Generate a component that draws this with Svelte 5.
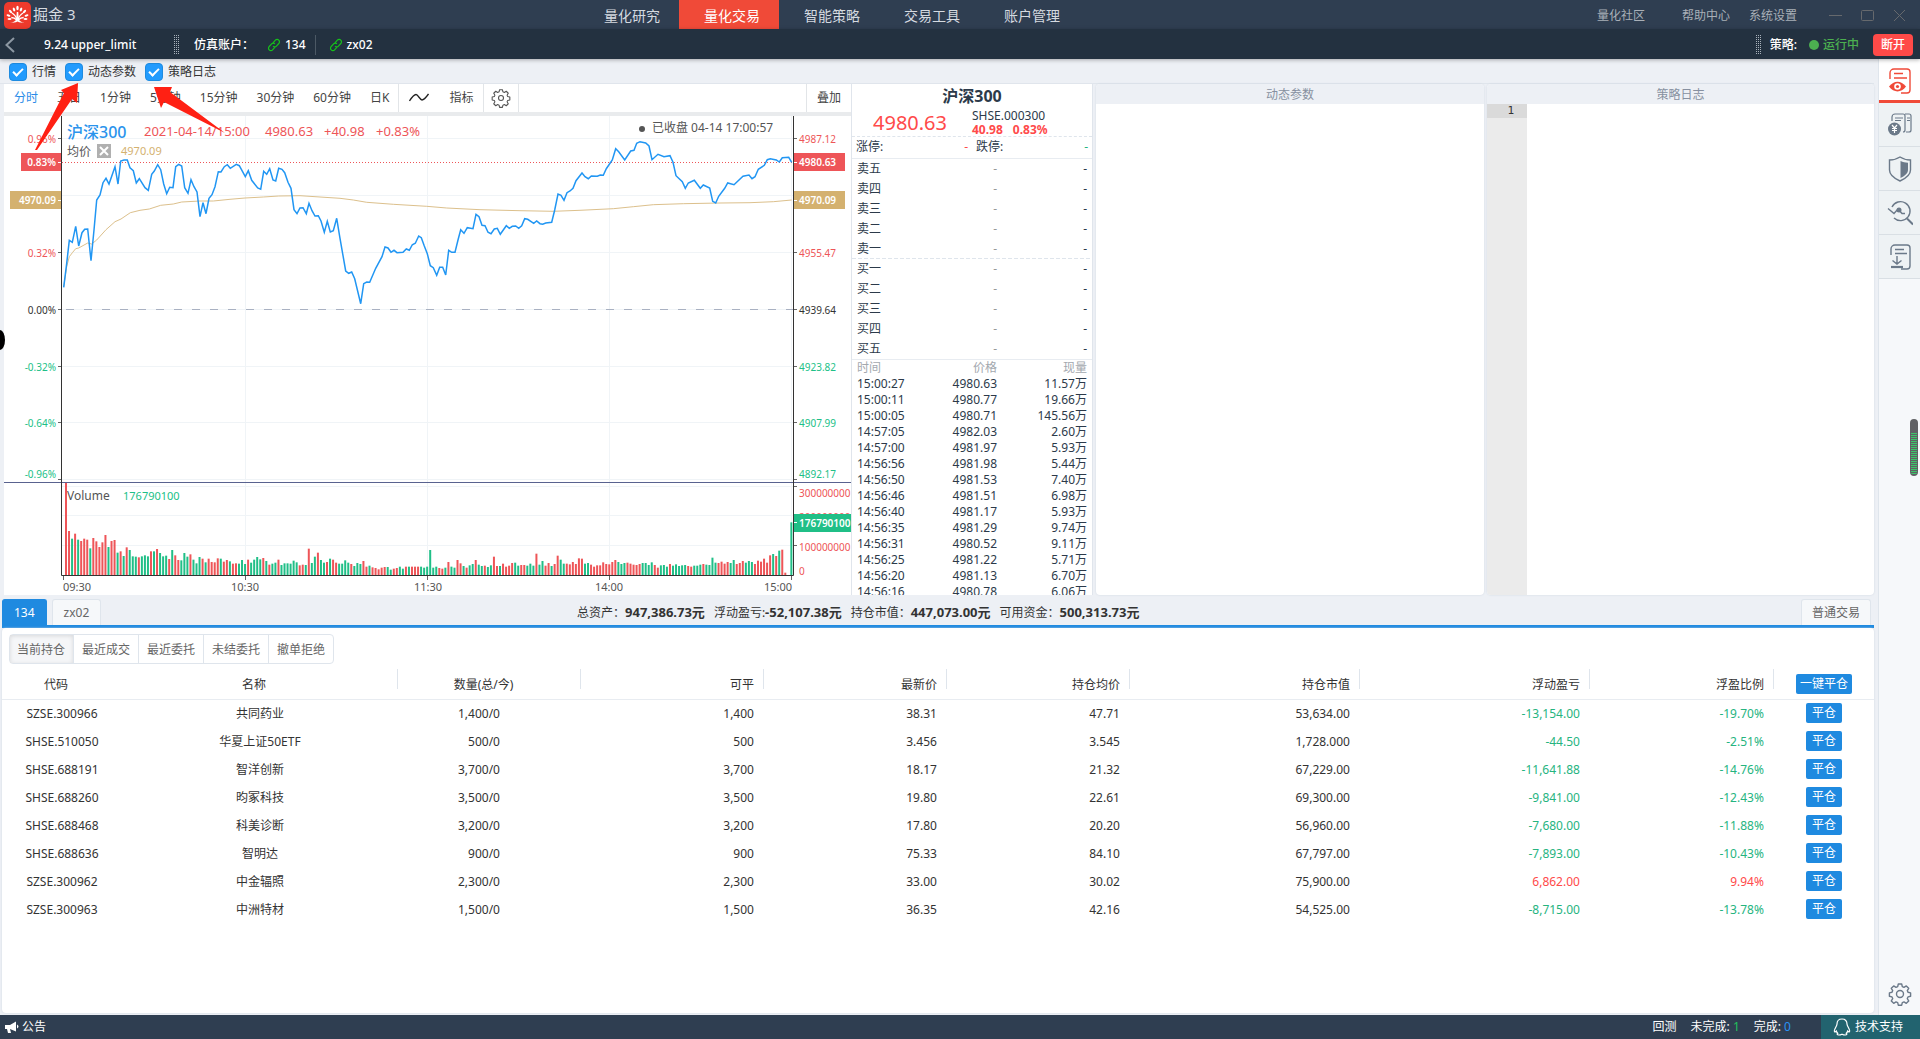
<script lang="ts">
	const navItems = ["量化研究", "量化交易", "智能策略", "交易工具", "账户管理"];
	const linkItems = ["量化社区", "帮助中心", "系统设置"];
	const periods = ["分时", "五日", "1分钟", "5分钟", "15分钟", "30分钟", "60分钟", "日K"];
	const subTabs = ["当前持仓", "最近成交", "最近委托", "未结委托", "撤单拒绝"];
	let activeNav = $state("量化交易");
	let activePeriod = $state("分时");
	let activeSub = $state("当前持仓");
	let account = $state("134");
	let panels = $state([
		{ id: "quote", label: "行情", on: true },
		{ id: "params", label: "动态参数", on: true },
		{ id: "log", label: "策略日志", on: true }
	]);

	const levels = ["卖五", "卖四", "卖三", "卖二", "卖一", "买一", "买二", "买三", "买四", "买五"];
	const trades = [
		["15:00:27", "4980.63", "11.57万"],
		["15:00:11", "4980.77", "19.66万"],
		["15:00:05", "4980.71", "145.56万"],
		["14:57:05", "4982.03", "2.60万"],
		["14:57:00", "4981.97", "5.93万"],
		["14:56:56", "4981.98", "5.44万"],
		["14:56:50", "4981.53", "7.40万"],
		["14:56:46", "4981.51", "6.98万"],
		["14:56:40", "4981.17", "5.93万"],
		["14:56:35", "4981.29", "9.74万"],
		["14:56:31", "4980.52", "9.11万"],
		["14:56:25", "4981.22", "5.71万"],
		["14:56:20", "4981.13", "6.70万"],
		["14:56:16", "4980.78", "6.06万"]
	];

	const stats = [
		["总资产：", "947,386.73元"],
		["浮动盈亏:", "-52,107.38元"],
		["持仓市值：", "447,073.00元"],
		["可用资金：", "500,313.73元"]
	];
	const columns = [
		{ name: "代码", width: 120 },
		{ name: "名称", width: 276 },
		{ name: "数量(总/今)", width: 183 },
		{ name: "可平", width: 183 },
		{ name: "最新价", width: 183 },
		{ name: "持仓均价", width: 183 },
		{ name: "持仓市值", width: 230 },
		{ name: "浮动盈亏", width: 230 },
		{ name: "浮盈比例", width: 184 },
		{ name: "", width: 100 }
	];
	const positions = [
		["SZSE.300966", "共同药业", "1,400", "38.31", "47.71", "53,634.00", "-13,154.00", "-19.70%"],
		["SHSE.510050", "华夏上证50ETF", "500", "3.456", "3.545", "1,728.000", "-44.50", "-2.51%"],
		["SHSE.688191", "智洋创新", "3,700", "18.17", "21.32", "67,229.00", "-11,641.88", "-14.76%"],
		["SHSE.688260", "昀冢科技", "3,500", "19.80", "22.61", "69,300.00", "-9,841.00", "-12.43%"],
		["SHSE.688468", "科美诊断", "3,200", "17.80", "20.20", "56,960.00", "-7,680.00", "-11.88%"],
		["SHSE.688636", "智明达", "900", "75.33", "84.10", "67,797.00", "-7,893.00", "-10.43%"],
		["SZSE.300962", "中金辐照", "2,300", "33.00", "30.02", "75,900.00", "6,862.00", "9.94%"],
		["SZSE.300963", "中洲特材", "1,500", "36.35", "42.16", "54,525.00", "-8,715.00", "-13.78%"]
	];

	// chart series, three units to a pixel
	const priceLine = "191,532 200,460 208,391 217,397 227,349 236,408 246,368 254,358 263,357 273,452 282,360 290,270 300,255 309,218 318,205 327,222 345,170 354,222 362,153 372,150 382,150 390,173 400,182 409,219 418,206 435,233 445,241 455,193 463,183 473,164 482,179 491,222 500,251 509,232 519,233 527,170 536,163 545,168 554,233 564,250 573,209 582,230 591,246 600,320 609,278 618,311 627,265 636,254 645,230 655,185 663,186 673,170 682,164 691,175 709,163 718,167 736,200 745,182 755,211 773,234 782,238 791,184 800,193 809,176 819,210 827,213 836,175 846,178 854,188 864,217 873,235 882,299 891,311 900,294 909,293 919,311 927,280 936,302 945,318 955,317 963,333 973,367 982,334 991,366 1000,362 1010,325 1019,380 1037,483 1046,490 1055,486 1064,506 1082,581 1091,521 1100,516 1109,517 1127,475 1146,440 1155,411 1164,414 1173,427 1182,421 1191,428 1209,427 1219,417 1228,421 1237,404 1246,400 1256,378 1264,383 1273,408 1282,431 1291,467 1300,473 1310,496 1319,472 1328,472 1337,495 1346,421 1355,427 1365,427 1374,390 1382,359 1392,370 1402,353 1419,356 1428,313 1437,320 1446,346 1455,347 1464,367 1473,371 1483,357 1492,355 1501,373 1519,347 1528,355 1537,349 1547,348 1556,355 1565,347 1574,326 1583,328 1601,340 1610,333 1620,341 1628,343 1637,339 1655,337 1664,300 1674,252 1683,256 1692,271 1701,248 1710,243 1719,235 1728,212 1746,189 1755,200 1765,206 1774,198 1792,199 1801,195 1810,196 1819,176 1837,150 1847,116 1856,125 1874,150 1892,123 1902,121 1910,100 1920,95 1937,99 1947,108 1956,149 1974,133 1992,140 2010,137 2019,157 2028,197 2047,215 2056,235 2065,219 2083,211 2101,235 2110,225 2129,234 2138,274 2147,279 2156,259 2174,235 2183,219 2202,224 2229,199 2247,195 2256,206 2265,200 2275,178 2293,166 2302,149 2311,146 2329,150 2338,156 2347,143 2366,142 2375,157";
	const avgLine = "191,530 200,470 208,440 218,427 227,416 236,414 263,399 275,402 290,390 318,359 345,335 363,327 391,308 420,301 448,297 482,286 520,282 545,276 600,273 640,273 690,268 735,264 790,261 836,258 900,257 960,261 1020,265 1060,270 1100,277 1180,283 1280,289 1340,294 1440,299 1560,302 1660,304 1740,301 1840,296 1900,290 1960,284 2050,281 2160,279 2250,278 2320,275 2375,270";
	const volumes = "277r 132r 109g 124r 106g 102r 109r 106r 80g 111r 101r 84r 98r 120r 84g 102r 105r 67g 71r 57g 83r 75g 56g 55g 53r 56g 59g 56g 71r 71g 78r 66g 56g 58g 48r 75g 59r 45r 44g 66g 55g 62r 46g 35g 54g 49r 38g 49r 39r 38r 50r 49g 40r 45r 41g 34r 35r 34g 45g 33g 46r 37g 46g 54g 47g 51r 42g 31r 34g 37g 46r 30g 35g 35g 34g 43g 38g 29r 31r 30g 79r 36g 55g 67r 45g 37g 39r 49g 46r 37r 34g 34g 44g 37g 33r 27g 36g 33g 42r 25r 28g 23r 21r 17r 22r 24r 24g 16g 19r 21r 25g 19g 25r 25g 25r 25r 25r 25g 22g 25g 75g 22g 25g 21r 19r 22g 39r 25g 22g 45r 35r 27g 22r 29g 33g 45r 31g 27g 28r 24g 29g 55r 27r 27g 34r 25r 28r 36r 37g 28g 30r 30r 28g 34g 28g 64r 31g 42g 28r 36r 27g 33r 58r 46g 34g 34r 32r 39r 33r 50r 49r 34g 36g 31r 25r 29r 29r 38r 33r 32r 39r 45r 39g 33g 36g 37r 34r 31r 30r 33r 36g 36g 30g 38g 30r 22r 29g 30g 25g 33r 28g 32g 27g 29g 30g 27r 25r 28g 28g 31g 33r 31g 30g 52g 37g 36r 40r 34r 39r 36g 45g 33r 36r 42r 37g 42g 39g 33r 43r 40r 49r 37r 59r 63g 57r 73g 76r 7r 0r 158g"
		.split(" ")
		.map((v, i) => ({
			x: 61 + i * 3.035,
			h: parseInt(v) / 3,
			up: v.endsWith("r")
		}));

	const toPoints = (s: string) =>
		s.split(" ").map((p) => {
			const [x, y] = p.split(",").map(Number);
			return `${(x / 3 - 4).toFixed(1)},${(y / 3 - 6).toFixed(1)}`;
		}).join(" ");

	const leftAxis = [
		{ y: 22.5, t: "0.96%", c: "up" },
		{ y: 136.5, t: "0.32%", c: "up" },
		{ y: 193.5, t: "0.00%", c: "flat" },
		{ y: 250.5, t: "-0.32%", c: "down" },
		{ y: 306.5, t: "-0.64%", c: "down" },
		{ y: 357.5, t: "-0.96%", c: "down" }
	];
	const rightAxis = [
		{ y: 22.5, t: "4987.12", c: "up" },
		{ y: 136.5, t: "4955.47", c: "up" },
		{ y: 193.5, t: "4939.64", c: "flat" },
		{ y: 250.5, t: "4923.82", c: "down" },
		{ y: 306.5, t: "4907.99", c: "down" },
		{ y: 357.5, t: "4892.17", c: "down" },
		{ y: 376.5, t: "300000000", c: "up" },
		{ y: 400.5, t: "200000000", c: "up" },
		{ y: 430.5, t: "100000000", c: "up" },
		{ y: 454.5, t: "0", c: "up" }
	];
	const gridRows = [22.5, 79.5, 136.5, 193.5, 250.5, 306.5, 363.5, 370.5, 399.5, 429.5];
	const gridCols = [241.5, 423.5, 605.5, 787.5];
	const tickRows = [22.5, 136.5, 193.5, 250.5, 306.5, 363.5];

	const gearPath = "M10.3 2h3.4l.6 2.6 1.7.7 2.3-1.4 2.4 2.4-1.4 2.3.7 1.7 2.6.6v3.4l-2.6.6-.7 1.7 1.4 2.3-2.4 2.4-2.3-1.4-1.7.7-.6 2.6h-3.4l-.6-2.6-1.7-.7-2.3 1.4-2.4-2.4 1.4-2.3-.7-1.7-2.6-.6v-3.4l2.6-.6.7-1.7-1.4-2.3 2.4-2.4 2.3 1.4 1.7-.7z";
</script>

{#snippet linkIcon()}
	<svg class="link" viewBox="0 0 14 14" width="14" height="14" aria-hidden="true">
		<path d="M6 4.8 8.4 2.2a2.3 2.3 0 0 1 3.4 0 2.3 2.3 0 0 1 0 3.3L9.4 8.1a2.3 2.3 0 0 1-3.3 0M8 9.2l-2.400 2.600a2.300 2.300 0 0 1-3.400 0 2.300 2.300 0 0 1 0-3.300l2.400-2.600a2.300 2.300 0 0 1 3.300 0" />
	</svg>
{/snippet}

<div class="page">
	<header class="topbar">
		<div class="brand">
			<svg viewBox="0 0 27 27" width="27" height="27" aria-hidden="true">
				<rect width="27" height="27" rx="5" fill="#ee3a2c" />
				<g fill="#fff">
					<ellipse cx="13.500" cy="6" rx="1.200" ry="2.200" />
					<ellipse cx="10" cy="7.500" rx="1.100" ry="2" transform="rotate(-22 10 7.500)" />
					<ellipse cx="17" cy="7.500" rx="1.100" ry="2" transform="rotate(22 17 7.500)" />
					<ellipse cx="6.500" cy="9.500" rx="1.100" ry="2" transform="rotate(-45 6.500 9.500)" />
					<ellipse cx="20.500" cy="9.500" rx="1.100" ry="2" transform="rotate(45 20.500 9.500)" />
					<ellipse cx="4.500" cy="13.500" rx="2" ry="1" transform="rotate(15 4.500 13.500)" />
					<ellipse cx="22.500" cy="13.500" rx="2" ry="1" transform="rotate(-15 22.500 13.500)" />
					<ellipse cx="5.500" cy="17" rx="2" ry="1" />
					<ellipse cx="21.500" cy="17" rx="2" ry="1" />
					<path d="M12.800 10h1.400l.6 7c.3 2 3 3.500 6.200 4-3-.2-5.500-.5-7.500-1.500-2 1-4.500 1.300-7.500 1.500 3.200-.5 5.900-2 6.200-4z" />
				</g>
				<path d="M13 17C11.500 13 9.500 12 8 11M14 17c1.500-4 3.500-5 5-6M12.800 18c-2-2-3.800-2.500-5.500-2.500M14.200 18c2-2 3.800-2.500 5.500-2.500" fill="none" stroke="#fff" stroke-width="1.300" />
			</svg>
			<span>掘金 3</span>
		</div>
		<nav>
			{#each navItems as item}
				<button class:active={activeNav === item} onclick={() => (activeNav = item)}>{item}</button>
			{/each}
		</nav>
		<div class="toplinks">
			{#each linkItems as item}
				<a href="#{item}">{item}</a>
			{/each}
			<button aria-label="最小化"><svg viewBox="0 0 13 13" width="13" height="13"><path d="M0 6.500h13" /></svg></button>
			<button aria-label="最大化"><svg viewBox="0 0 13 13" width="13" height="13"><rect x=".5" y="1.500" width="12" height="10" rx="1" /></svg></button>
			<button aria-label="关闭"><svg viewBox="0 0 13 13" width="13" height="13"><path d="m1 1 11 11M12 1 1 12" /></svg></button>
		</div>
	</header>

	<div class="subbar">
		<button class="back" aria-label="返回"><svg viewBox="0 0 10 16" width="10" height="16"><path d="M9 1 1.500 8 9 15" /></svg></button>
		<h1>9.24 upper_limit</h1>
		<i class="grip"></i>
		<span class="sim">仿真账户：</span>
		<span class="acct">{@render linkIcon()}134</span>
		<span class="acct second">{@render linkIcon()}zx02</span>
		<i class="grip right"></i>
		<span class="strategy">策略:</span>
		<span class="running">运行中</span>
		<button class="disconnect">断开</button>
	</div>

	<div class="body">
		<main>
			<div class="toggles">
				{#each panels as panel}
					<label for={panel.id}><input type="checkbox" id={panel.id} bind:checked={panel.on} />{panel.label}</label>
				{/each}
			</div>

			<div class="workspace">
				<section class="chart">
					<div class="tools">
						<div class="periods">
							{#each periods as p}
								<button class:on={activePeriod === p} onclick={() => (activePeriod = p)}>{p}</button>
							{/each}
						</div>
						<div class="group">
							<button aria-label="线形"><svg viewBox="0 0 20 10" width="20" height="10"><path d="M.5 8C3 4 5 1.500 7 1.500S11 7 13 7s4-2.500 6.500-6" stroke="#222" fill="none" stroke-width="1.300" /></svg></button>
							<button>指标</button>
						</div>
						<div class="group gear">
							<button aria-label="设置">
								<svg viewBox="0 0 24 24" width="20" height="20" fill="none" stroke="#555" stroke-width="1.300" stroke-linejoin="round"><path d={gearPath} /><circle cx="12" cy="12" r="3" /></svg>
							</button>
						</div>
						<button class="overlay">叠加</button>
					</div>

					<svg class="plot" viewBox="0 0 847 479" role="img" aria-label="沪深300 分时图">
						<rect width="847" height="479" fill="#fff" />
						<g stroke="#f0f4f7">
							{#each gridRows as y}<path d="M58 {y}H789" />{/each}
							{#each gridCols as x}<path d="M{x} 0V459" />{/each}
						</g>
						<path d="M58 193.500H789" stroke="#a9b1c2" stroke-dasharray="8 10" stroke-dashoffset="-4" />
						<path d="M58 46.500H789" stroke="#ee5558" stroke-dasharray="1 2" />

						<g class="bars">
							{#each volumes as v}
								<rect x={v.x} y={459 - v.h} width="2" height={v.h} class={v.up ? "up" : "down"} />
							{/each}
						</g>
						<polyline points={toPoints(avgLine)} fill="none" stroke="#dcc08c" />
						<polyline points={toPoints(priceLine)} fill="none" stroke="#2196f3" stroke-width="1.500" />

						<path d="M0 366.500H847" stroke="#59628f" />
						<path d="M57.500 0V459.500H789.500V0" fill="none" stroke="#333" />
						<g stroke="#666">
							{#each tickRows as y}<path d="M54 {y}h3M790 {y}h3" />{/each}
							<path d="M790 370.500h3M790 429.500h3M59.500 460v4" />
							{#each gridCols as x}<path d="M{x} 460v4" />{/each}
						</g>

						<g class="axis">
							{#each leftAxis as a}<text x="52" y={a.y + 4} text-anchor="end" class={a.c}>{a.t}</text>{/each}
							{#each rightAxis as a}<text x="795" y={a.y + 4} class={a.c}>{a.t}</text>{/each}
						</g>
						<g class="tags">
							<rect x="17" y="37" width="40" height="18" fill="#ee5558" />
							<rect x="6" y="75" width="51" height="18" fill="#d4b16f" />
							<rect x="790" y="37" width="51" height="18" fill="#ee5558" />
							<rect x="790" y="75" width="51" height="18" fill="#d4b16f" />
							<rect x="790" y="398" width="57" height="18" fill="#20bf87" />
							<path d="M54 46.500h3M54 84.500h3M790 46.500h3M790 84.500h3M790 406.500h3" stroke="#fff" />
							<text x="52" y="50" text-anchor="end">0.83%</text>
							<text x="52" y="88" text-anchor="end">4970.09</text>
							<text x="795" y="50">4980.63</text>
							<text x="795" y="88">4970.09</text>
							<text x="795" y="411">176790100</text>
						</g>
						<g class="times">
							<text x="59" y="475">09:30</text>
							<text x="241" y="475" text-anchor="middle">10:30</text>
							<text x="424" y="475" text-anchor="middle">11:30</text>
							<text x="605" y="475" text-anchor="middle">14:00</text>
							<text x="788" y="475" text-anchor="end">15:00</text>
						</g>

						<text x="63" y="22" class="name">沪深300</text>
						<g class="head">
							<text x="140" y="20">2021-04-14/15:00</text>
							<text x="261" y="20">4980.63</text>
							<text x="320" y="20">+40.98</text>
							<text x="372" y="20">+0.83%</text>
						</g>
						<g class="legend">
							<text x="63" y="40">均价</text>
							<rect x="93" y="28" width="14" height="14" fill="#b0b0b0" />
							<path d="m96 31 8 8M104 31l-8 8" stroke="#fff" stroke-width="2" />
							<text x="117" y="39" class="avg">4970.09</text>
							<circle cx="638" cy="13" r="3" fill="#555" />
							<text x="648" y="16">已收盘 04-14 17:00:57</text>
							<text x="63" y="384">Volume</text>
							<text x="119" y="384" class="vol">176790100</text>
						</g>
					</svg>
				</section>

				<section class="quote">
					<h2>沪深300</h2>
					<div class="price">
						<strong>4980.63</strong>
						<p>SHSE.000300<br /><b>40.98</b><b>0.83%</b></p>
					</div>
					<div class="limits">
						<span>涨停:</span><i class="up">-</i><span>跌停:</span><i class="down">-</i>
					</div>
					<table class="depth">
						<tbody>
							{#each levels as l}
								<tr class:mid={l === "卖一"}><th scope="row">{l}</th><td class="dim">-</td><td>-</td></tr>
							{/each}
						</tbody>
					</table>
					<div class="trades">
						<table>
							<thead><tr><th>时间</th><th>价格</th><th>现量</th></tr></thead>
							<tbody>
								{#each trades as t}
									<tr><td>{t[0]}</td><td>{t[1]}</td><td>{t[2]}</td></tr>
								{/each}
							</tbody>
						</table>
					</div>
				</section>

				<section class="panel">
					<h3>动态参数</h3>
				</section>
				<section class="panel">
					<h3>策略日志</h3>
					<div class="editor"><div class="gutter"><span>1</span></div></div>
				</section>
			</div>

			<div class="tabs">
				<div class="left">
					{#each ["134", "zx02"] as name}
						<button class:active={account === name} onclick={() => (account = name)}>{name}</button>
					{/each}
				</div>
				<div class="stats">
					{#each stats as [label, value]}
						<span>{label}<b>{value}</b></span>
					{/each}
				</div>
				<button class="mode">普通交易</button>
			</div>

			<section class="holdings">
				<div class="subtabs">
					{#each subTabs as t}
						<button class:active={activeSub === t} onclick={() => (activeSub = t)}>{t}</button>
					{/each}
				</div>
				<table>
					<colgroup>
						{#each columns as c}<col style="width: {c.width / 18.72}%" />{/each}
					</colgroup>
					<thead>
						<tr>
							{#each columns as c}
								<th>{#if c.name}{c.name}{:else}<button class="close all">一键平仓</button>{/if}</th>
							{/each}
						</tr>
					</thead>
					<tbody>
						{#each positions as p}
							<tr>
								<td>{p[0]}</td>
								<td>{p[1]}</td>
								<td>{p[2]}/0</td>
								<td>{p[2]}</td>
								<td>{p[3]}</td>
								<td>{p[4]}</td>
								<td>{p[5]}</td>
								<td class={p[6].startsWith("-") ? "down" : "up"}>{p[6]}</td>
								<td class={p[7].startsWith("-") ? "down" : "up"}>{p[7]}</td>
								<td><button class="close">平仓</button></td>
							</tr>
						{/each}
					</tbody>
				</table>
			</section>
		</main>

		<aside>
			<button class="active" aria-label="策略监控">
				<svg viewBox="0 0 26 28" width="26" height="28">
					<path d="M3 12V6a4 4 0 0 1 4-4h13a3 3 0 0 1 3 3v18a3 3 0 0 1-3 3h-6M7 6.500h9M7 11h13" />
					<path d="M2 19.500c5-6.500 12-6.500 17 0-5 6.500-12 6.500-17 0z" fill="currentColor" stroke="none" />
					<circle cx="10.500" cy="19.500" r="3.300" fill="#fff" stroke="none" /><circle cx="10.500" cy="19.500" r="1.600" fill="currentColor" stroke="none" />
				</svg>
			</button>
			<button aria-label="资金">
				<svg viewBox="0 0 26 28" width="26" height="28">
					<path d="M5 10V6a3 3 0 0 1 3-3h8a2 2 0 0 1 2 2v14a2 2 0 0 1-2 2M18 3h4a2 2 0 0 1 2 2v14a2 2 0 0 1-2 2h-3M8 7h8M8 9.500h6M20 7h3M20 9.500h3" stroke-width="1.200" />
					<circle cx="7.500" cy="18" r="6.500" fill="currentColor" stroke="none" />
					<path d="m5 14 2.500 3L10 14M7.500 17v5M5 17.500h5M5 19.500h5" stroke="#fff" stroke-width="1.200" />
				</svg>
			</button>
			<button aria-label="风控">
				<svg viewBox="0 0 26 28" width="26" height="28">
					<path d="M13 2c3 2 6 3 10.500 3v10c0 5-5 8.500-10.500 11C7.500 23.500 2.500 20 2.500 15V5C7 5 10 4 13 2z" />
					<path d="M13.500 6c2.500 1 4.500 1.500 7.500 1.700V15c0 3.500-3.500 6-7.500 8z" fill="currentColor" stroke="none" />
				</svg>
			</button>
			<button aria-label="分析">
				<svg viewBox="0 0 26 28" width="26" height="28">
					<path d="M5 8a9.500 9.500 0 1 1 2 11M1 9.500l6 5 4-4.500 4 4.500h3" />
					<circle cx="12" cy="11" r="2.500" fill="currentColor" stroke="none" />
					<path d="m20 19.500 6 6" stroke-width="2" />
				</svg>
			</button>
			<button aria-label="导出">
				<svg viewBox="0 0 26 28" width="26" height="28">
					<path d="M4 12V6a4 4 0 0 1 4-4h12a3 3 0 0 1 3 3v18a3 3 0 0 1-3 3h-6M8 6.500h9M8 10.500h12M10 13v8M5.500 17.500 10 21l4.500-3.500" />
					<path d="M4 24h12" stroke-width="2.200" />
				</svg>
			</button>
			<button class="settings" aria-label="设置">
				<svg viewBox="0 0 24 24" width="24" height="24"><path d={gearPath} stroke-linejoin="round" /><circle cx="12" cy="12" r="3.500" /></svg>
			</button>
		</aside>
	</div>

	<footer>
		<svg viewBox="0 0 14 12" width="14" height="12" aria-hidden="true"><path d="M0 4h5l6-3.500v10L5 8H0zM2 8h3l1 4H3zM12 3.500c2 1 2 3 0 4z" fill="#fff" /></svg>
		<span class="notice">公告</span>
		<span>回测</span>
		<span>未完成: <b class="green">1</b></span>
		<span>完成: <b class="blue">0</b></span>
		<button>
			<svg viewBox="0 0 18 18" width="18" height="18" aria-hidden="true"><path d="M9 1C5.500 1 4 3.500 4 6c0 2-2.500 4.500-2.700 7 .2 1.400 1.200.8 2 0 .3 1 .8 1.700 1.400 2.200-1 .5-.8 1.800 1 1.800 1.300 0 2.300-.3 3.300-.8 1 .5 2 .8 3.300.8 1.800 0 2-1.300 1-1.800.6-.5 1.100-1.200 1.400-2.200.8.8 1.800 1.400 2 0C16.500 10.500 14 8 14 6c0-2.500-1.500-5-5-5z" fill="none" stroke="#fff" stroke-width="1.200" /></svg>
			技术支持
		</button>
	</footer>

	<button class="drawer" aria-label="展开"></button>
	<i class="meter"></i>
	<svg class="arrows" viewBox="0 0 240 160" width="240" height="160" aria-hidden="true">
		<path d="M35 150 64 93l-3-3 17-7-1 20-5-4-35 51z" fill="#ff2013" />
		<path d="M154 87h18l-2 5 55 41-61-31-3 6z" fill="#ff2013" />
	</svg>
</div>

<style>
	:global(body) {
		margin: 0;
	}
	.page {
		position: relative;
		display: flex;
		flex-direction: column;
		min-height: 100vh;
		font-family: "Noto Sans", "Noto Sans CJK SC", sans-serif;
		font-size: 12px;
		line-height: 16px;
		color: #333;
		background: #edf0f5;
	}
	button {
		padding: 0;
		border: 0;
		background: none;
		font: inherit;
		color: inherit;
		cursor: pointer;
	}
	h1, h2, h3, p {
		margin: 0;
		font-weight: normal;
	}
	h1, h3 {
		font-size: 12px;
	}
	svg {
		display: block;
	}
	table {
		width: 100%;
		border-collapse: collapse;
		table-layout: fixed;
	}
	th, td {
		padding: 0;
		font-weight: normal;
	}
	.up {
		color: #ff4a4a;
		fill: #ee5558;
	}
	.down {
		color: #26b47f;
		fill: #20bf87;
	}

	.topbar {
		display: grid;
		grid-template-columns: 579fr 500px 841fr;
		height: 29px;
		background: #2f3e51;
		color: #d5dae0;
	}
	.brand {
		display: flex;
		align-items: center;
		gap: 2px;
		padding-left: 4px;
		font-size: 15px;
	}
	.brand span {
		line-height: 29px;
		padding-bottom: 2px;
	}
	nav {
		display: flex;
	}
	nav button {
		flex: 1;
		padding-left: 6px;
		font-size: 14px;
	}
	nav .active {
		background: #f04a38;
		color: #fff;
	}
	.toplinks {
		display: flex;
		justify-content: flex-end;
		align-items: center;
		gap: 19px;
		padding-right: 14px;
	}
	.toplinks a {
		color: #a9b0b8;
		text-decoration: none;
	}
	.toplinks a:first-child {
		margin-right: 18px;
	}
	.toplinks a + button {
		margin-left: 13px;
	}
	.toplinks svg {
		fill: none;
		stroke: #66696d;
	}

	.subbar {
		display: flex;
		align-items: center;
		box-sizing: border-box;
		height: 30px;
		padding: 1px 7px 0 5px;
		background: #233140;
		color: #fff;
		font-weight: 500;
		box-shadow: 0 1px 4px rgba(0, 0, 0, 0.3);
		z-index: 1;
	}
	.back svg {
		fill: none;
		stroke: #8d98a3;
		stroke-width: 2;
	}
	h1 {
		width: 129px;
		padding-left: 29px;
		font-weight: 500;
	}
	.grip {
		width: 6px;
		height: 20px;
		background: conic-gradient(#a9b2bb 25%, transparent 0) 0 0 / 2px 2px;
	}
	.sim {
		width: 73px;
		padding-left: 15px;
	}
	.acct {
		display: flex;
		align-items: center;
		gap: 4px;
		height: 20px;
	}
	.acct.second {
		margin-left: 9px;
		padding-left: 13px;
		border-left: 1px solid #4c5965;
	}
	.link path {
		fill: none;
		stroke: #16c01a;
		stroke-width: 1.2;
	}
	.grip.right {
		margin-left: auto;
	}
	.strategy {
		margin: 0 12px 0 9px;
	}
	.running {
		display: flex;
		align-items: center;
		gap: 4px;
		color: #4caf50;
	}
	.running::before {
		content: "";
		width: 10px;
		height: 10px;
		border-radius: 50%;
		background: #4caf50;
	}
	.disconnect {
		width: 40px;
		height: 22px;
		margin-left: 14px;
		border-radius: 4px;
		background: #ff4a48;
	}

	.body {
		display: flex;
		flex: 1;
	}
	main {
		display: flex;
		flex-direction: column;
		flex: 1;
		min-width: 0;
		padding-bottom: 2px;
	}
	.toggles {
		display: flex;
		gap: 9px;
		box-sizing: border-box;
		height: 24px;
		padding: 2px 0 0 9px;
	}
	.toggles label {
		display: flex;
		align-items: center;
		gap: 5px;
	}
	.toggles input {
		appearance: none;
		display: flex;
		align-items: center;
		justify-content: center;
		width: 18px;
		height: 18px;
		margin: 0;
		border: 1px solid #1e8be0;
		border-radius: 4px;
		background: #fff;
	}
	.toggles input:checked {
		background: #229bfd;
	}
	.toggles input:checked::after {
		content: "";
		width: 8px;
		height: 4px;
		margin-bottom: 3px;
		border: solid #fff;
		border-width: 0 0 2px 2px;
		transform: rotate(-45deg);
	}

	.workspace {
		display: grid;
		grid-template-columns: 847fr 242px 391fr 390fr;
		margin: 0 4px 1px 0;
		padding-left: 4px;
		border-top: 1px solid #e0e5ec;
	}
	.chart {
		min-width: 0;
		background: #e9ebed;
	}
	.tools {
		display: flex;
		height: 28px;
		margin-bottom: 4px;
		background: #fff;
		color: #444;
	}
	.tools button {
		padding-top: 2px;
	}
	.periods, .group {
		display: flex;
		border-right: 1px solid #e2e5e8;
	}
	.periods button {
		padding: 0 9px 0 10px;
	}
	.periods .on {
		color: #2a8ce8;
	}
	.group button {
		padding: 0 10px;
	}
	.gear button {
		padding: 0 7px;
	}
	.tools .overlay {
		margin-left: auto;
		padding: 0 10px;
		border-left: 1px solid #e2e5e8;
	}
	.plot {
		width: 100%;
		height: auto;
	}
	.axis text, .tags text {
		font-size: 10px;
	}
	.axis .flat {
		fill: #333;
	}
	.tags text {
		fill: #fff;
		font-weight: 600;
	}
	.times text {
		font-size: 11px;
		fill: #555;
	}
	.name {
		font-size: 16px;
		font-weight: 500;
		fill: #2a93ec;
	}
	.head text {
		font-size: 13px;
		fill: #ee5558;
	}
	.legend text {
		font-size: 12px;
		fill: #555;
	}
	.legend .avg {
		font-size: 11px;
		fill: #d4b16f;
	}
	.legend .vol {
		font-size: 11px;
		fill: #20bf87;
	}

	.quote {
		display: flex;
		flex-direction: column;
		border: solid #e0e5ec;
		border-width: 0 1px;
		background: #fff;
		color: #2c3a4a;
	}
	h2 {
		font-size: 16px;
		line-height: 25px;
		font-weight: bold;
		text-align: center;
	}
	.price {
		display: flex;
		align-items: center;
		gap: 25px;
		height: 27px;
		padding-left: 21px;
		border-bottom: 1px dashed #dfe5ec;
	}
	.price strong {
		font-size: 20px;
		line-height: 27px;
		font-weight: normal;
		color: #ff4a4a;
	}
	.price p {
		line-height: 14px;
	}
	.price b {
		margin-right: 10px;
		color: #ff4a4a;
	}
	.limits {
		display: flex;
		height: 21px;
		padding: 0 4px;
		border-bottom: 1px solid #e8ecf1;
		line-height: 20px;
	}
	.limits i {
		flex: 1;
		padding-right: 8px;
		text-align: right;
		font-style: normal;
	}
	.limits i:last-child {
		padding-right: 0;
	}
	.depth tr {
		height: 20px;
	}
	.depth th, .trades th:first-child, .trades td:first-child {
		width: 76px;
		padding-left: 5px;
		text-align: left;
	}
	.depth td, .trades td, .trades th {
		text-align: right;
	}
	.depth td:last-child, .trades td:last-child, .trades th:last-child {
		width: 90px;
		padding-right: 5px;
	}
	.dim {
		color: #999;
	}
	.mid {
		background: repeating-linear-gradient(90deg, #dfe5ec 0 4px, transparent 4px 6px) bottom / 100% 1px no-repeat;
	}
	.trades {
		flex-grow: 1;
		height: 0;
		overflow: hidden;
		border-top: 1px solid #e8ecf1;
	}
	.trades th {
		color: #a3a8ae;
	}
	.trades td {
		color: #2c3a4a;
	}

	.panel {
		display: flex;
		flex-direction: column;
		margin-left: 3px;
		border-radius: 4px;
		background: #fff;
		box-shadow: 0 0 2px #ced6df;
		overflow: hidden;
	}
	h3 {
		height: 20px;
		line-height: 21px;
		text-align: center;
		color: #8790a0;
		background: #edf0f5;
	}
	.editor {
		display: flex;
		flex: 1;
	}
	.gutter {
		width: 40px;
		background: #ebebeb;
	}
	.gutter span {
		display: block;
		padding-right: 13px;
		background: #dadada;
		line-height: 14px;
		text-align: right;
		font-family: "DejaVu Sans Mono", monospace;
		font-size: 11px;
	}

	.tabs {
		display: flex;
		align-items: flex-end;
		height: 29px;
		margin: 0 4px 0 2px;
		padding-right: 3px;
		border-bottom: 3px solid #1f8ae0;
	}
	.left {
		display: flex;
		gap: 5px;
		width: 575px;
	}
	.tabs button {
		height: 26px;
		padding: 1px 11px 0;
		border: 1px solid #dfe5ec;
		border-bottom: 0;
		border-radius: 3px 3px 0 0;
		background: #f6f8fa;
		color: #666;
	}
	.tabs .active {
		border-color: #1f8ae0;
		background: #1f8ae0;
		color: #fff;
	}
	.tabs .mode {
		padding: 1px 10px 0;
	}
	.stats {
		display: flex;
		flex: 1;
		gap: 9px;
		line-height: 24px;
		white-space: nowrap;
	}
	.stats b {
		font-size: 13px;
	}
	.holdings {
		flex: 1;
		margin: 0 4px 0 2px;
		padding-top: 6px;
		border-radius: 4px;
		background: #fff;
		box-shadow: 0 0 2px #ced6df;
	}
	.subtabs {
		display: inline-flex;
		margin: 0 0 5px 7px;
		border: 1px solid #dfe5ec;
		border-radius: 4px;
	}
	.subtabs button {
		height: 28px;
		padding: 1px 8px 0;
		border-left: 1px solid #dfe5ec;
		color: #666;
	}
	.subtabs button:first-child {
		padding-left: 7px;
		border-left: 0;
	}
	.subtabs .active {
		background: #f5f6f8;
		box-shadow: inset 0 1px 4px rgba(0, 0, 0, 0.12);
	}
	.holdings thead tr {
		height: 30px;
		border-bottom: 1px solid #e8ecf1;
	}
	.holdings th {
		background: linear-gradient(#dfe5ec, #dfe5ec) right top / 1px 20px no-repeat;
	}
	.holdings th:first-child, .holdings th:last-child {
		background: none;
	}
	.holdings tbody tr {
		height: 28px;
	}
	.holdings th, .holdings td {
		padding: 2px 10px 0 0;
		text-align: right;
	}
	.holdings th:nth-child(-n + 3) {
		padding-right: 12px;
		text-align: center;
	}
	.holdings td:nth-child(-n + 2) {
		padding-right: 0;
		text-align: center;
	}
	.holdings td:nth-child(3) {
		padding-right: 81px;
	}
	.holdings th:last-child, .holdings td:last-child {
		padding: 0;
		text-align: center;
	}
	.close {
		width: 36px;
		height: 20px;
		border-radius: 2px;
		background: #1f8ae0;
		color: #fff;
		vertical-align: middle;
	}
	.close.all {
		width: 56px;
	}

	aside {
		display: flex;
		flex-direction: column;
		width: 41px;
		border-left: 1px solid #dfe5ec;
		background: #f6f8fa;
		color: #6b7989;
	}
	aside button {
		display: flex;
		align-items: center;
		justify-content: center;
		height: 44px;
		padding: 1px 0 0 1px;
		border-bottom: 1px solid #d9dfe4;
		background: #eef2f4;
	}
	aside .active {
		padding-top: 3px;
		border-bottom: 3px solid #f04a38;
		background: #fff;
		color: #f04a38;
	}
	aside svg {
		fill: none;
		stroke: currentColor;
		stroke-width: 1.4;
	}
	aside .settings {
		margin-top: auto;
		border: 0;
		background: none;
	}

	footer {
		display: flex;
		align-items: center;
		gap: 14px;
		height: 24px;
		padding-left: 5px;
		background: #2f3e51;
		color: #fff;
	}
	.notice {
		flex: 1;
		margin-left: -11px;
	}
	footer b {
		font-weight: normal;
	}
	.green {
		color: #21c15c;
	}
	.blue {
		color: #2a93f5;
	}
	footer button {
		display: flex;
		align-items: center;
		gap: 4px;
		height: 24px;
		margin-left: 16px;
		padding: 0 17px 0 12px;
		background: #22636f;
	}

	.drawer {
		position: absolute;
		left: 0;
		top: 330px;
		width: 5px;
		height: 20px;
		border-radius: 0 5px 5px 0 / 0 10px 10px 0;
		background: #000;
	}
	.meter {
		position: absolute;
		right: 2px;
		top: 419px;
		width: 8px;
		height: 57px;
		box-sizing: border-box;
		border: 1px solid #606164;
		border-top-width: 14px;
		border-radius: 4px;
		background: repeating-linear-gradient(#3cc66a 0 1px, #606164 1px 2px);
	}
	.arrows {
		position: absolute;
		left: 0;
		top: 0;
		z-index: 2;
		pointer-events: none;
	}
</style>
